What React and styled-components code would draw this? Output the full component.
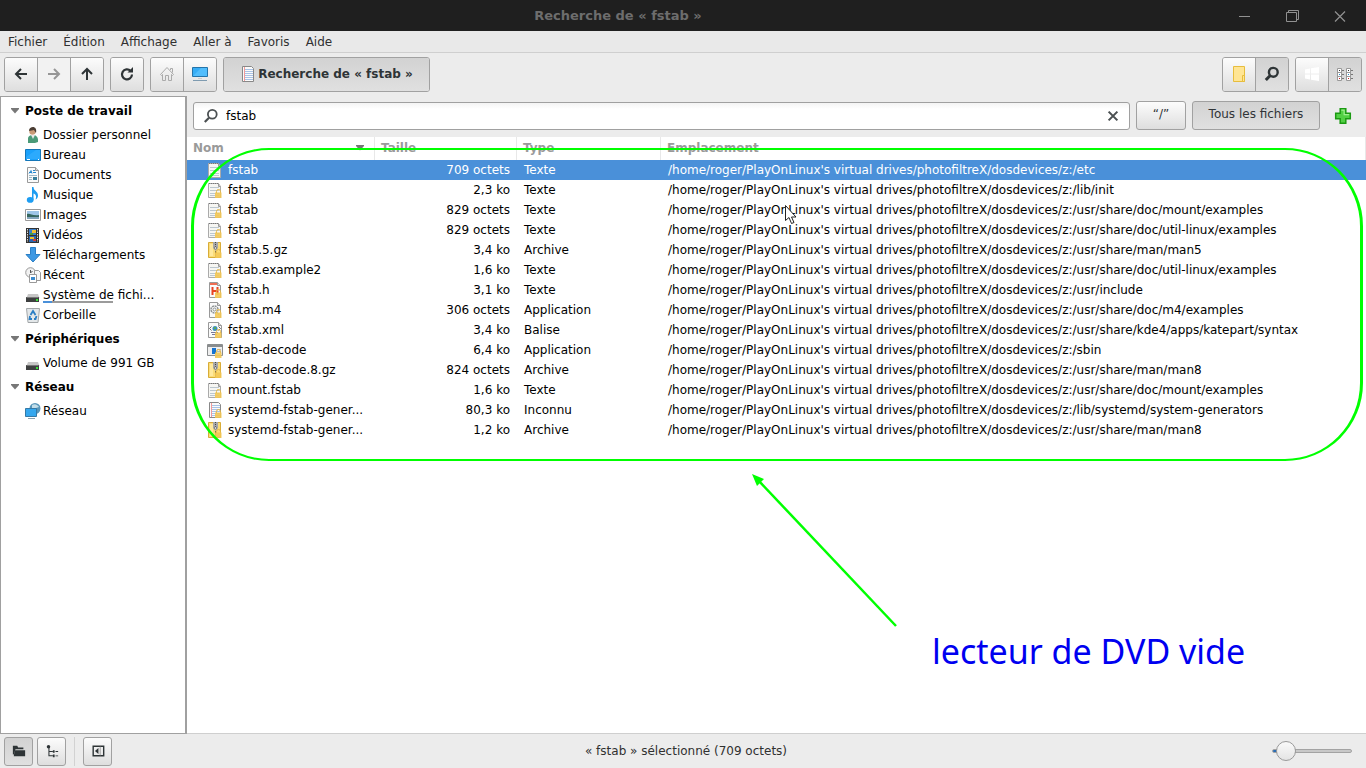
import React from 'react';
import styled, { createGlobalStyle, css } from 'styled-components';

const Global = createGlobalStyle`
  *, *::before, *::after { box-sizing: border-box; }
  body { margin: 0; background: #ececec; color: #000; font: 12px/20px "DejaVu Sans", sans-serif; }
  button, input { font: inherit; color: inherit; margin: 0; padding: 0; }
  svg { display: block; flex: none; }
`;

const Window = styled.div`
  position: relative;
  display: flex;
  flex-direction: column;
  min-height: 100vh;
  overflow: hidden;
`;

const TitleBar = styled.header`
  display: flex;
  align-items: center;
  height: 31px;
  background: #1f1f1f;
  color: #6d6d6d;
`;
const Title = styled.h1`
  flex: 1;
  margin: 0;
  padding-left: 14px;
  text-align: center;
  font-size: 13px;
  font-weight: bold;
`;
const WindowControls = styled.div`
  display: flex;
  gap: 32px;
  padding: 0 18px 0 14px;
`;
const WindowButton = styled.button`
  width: 16px;
  height: 16px;
  border: 0;
  background: none;
  color: #919191;
`;

const MenuBar = styled.nav`
  display: flex;
  gap: 16px;
  height: 22px;
  padding: 0 8px;
  background: #e9e9e9;
  border-bottom: 1px solid #cfcfcf;
`;
const MenuItem = styled.a`
  color: #303030;
  text-decoration: none;
  line-height: 22px;
`;

const Toolbar = styled.div`
  display: flex;
  gap: 6px;
  height: 43px;
  padding: 4px;
`;
const Spacer = styled.div`
  flex: 1;
`;
const raised = 'linear-gradient(#fcfcfc, #dedede)';
const sunken = 'linear-gradient(#d2d2d2, #e0e0e0)';
const ButtonGroup = styled.div`
  display: flex;
  border: 1px solid #a1a1a1;
  border-radius: 3px;
  overflow: hidden;
  height: 35px;
`;
const ToolButton = styled.button`
  display: flex;
  align-items: center;
  justify-content: center;
  width: ${(p) => (p.$wide ? '205px' : '32px')};
  gap: 2px;
  padding-bottom: 2px;
  border: 0;
  color: #2e3436;
  font-weight: bold;
  background: ${(p) => (p.$pressed ? sunken : raised)};
  & + & { border-left: 1px solid #a1a1a1; width: 33px; }
  &:disabled { background: #f2f2f2; color: #969696; }
`;

const Body = styled.div`
  display: flex;
  flex: 1;
`;
const Sidebar = styled.aside`
  width: 187px;
  flex: none;
  background: #fff;
  border: solid #a0a0a0;
  border-width: 1px 2px 1px 1px;
`;
const SectionTitle = styled.h2`
  display: flex;
  align-items: center;
  gap: 6px;
  height: 28px;
  margin: 0;
  padding-left: 10px;
  font-size: 12px;
`;
const PlaceList = styled.ul`
  list-style: none;
  margin: 0;
  padding: 0;
`;
const Place = styled.a`
  display: flex;
  align-items: center;
  gap: 2px;
  height: 20px;
  padding-left: 24px;
  color: #000;
  text-decoration: none;
`;
const PlaceName = styled.span`
  position: relative;
`;
const DiskUsage = styled.span`
  position: absolute;
  left: 0;
  bottom: 2px;
  width: 70px;
  height: 2px;
  background: linear-gradient(90deg, #4a90d9 9px, #9b9b9b 9px);
`;

const Main = styled.main`
  display: flex;
  flex-direction: column;
  flex: 1;
  min-width: 0;
  background: #fff;
  border-bottom: 1px solid #cfcfcf;
`;
const SearchRow = styled.form`
  display: flex;
  align-items: center;
  gap: 6px;
  height: 41px;
  padding: 0 14px 2px 6px;
  background: #ececec;
`;
const SearchBox = styled.label`
  display: flex;
  align-items: center;
  flex: 1;
  height: 28px;
  padding: 0 9px;
  gap: 7px;
  border: 1px solid #a0a0a0;
  border-radius: 3px;
  color: #4b5052;
  background: linear-gradient(#f4f4f4, #fff 6px);
`;
const SearchInput = styled.input`
  flex: 1;
  min-width: 0;
  border: 0;
  outline: 0;
  color: #000;
  background: none;
`;
const IconButton = styled.button`
  border: 0;
  background: none;
  color: #4b5052;
`;
const FilterButton = styled.button`
  width: ${(p) => (p.$wide ? '128px' : '50px')};
  height: 29px;
  padding-bottom: 4px;
  border: 1px solid #a1a1a1;
  border-radius: 3px;
  color: #303437;
  background: ${(p) => (p.$pressed ? sunken : raised)};
`;
const AddButton = styled(IconButton)`
  margin-left: 8px;
`;

const FileTable = styled.table`
  width: 100%;
  table-layout: fixed;
  border-collapse: separate;
  border-spacing: 0;
`;
const Heading = styled.th`
  width: ${(p) => p.$width || 'auto'};
  height: 23px;
  padding: 0 10px 2px 6px;
  text-align: left;
  color: #9a9a9a;
  border-right: 1px solid #e8e8e8;
`;
const HeadingInner = styled.div`
  display: flex;
  align-items: center;
  justify-content: space-between;
`;
const Cell = styled.td`
  height: 20px;
  padding: 0 7px;
  white-space: nowrap;
  overflow: hidden;
  text-align: ${(p) => (p.$right ? 'right' : 'left')};
`;
const NameCell = styled(Cell)`
  padding-left: 20px;
`;
const FileName = styled.div`
  display: flex;
  align-items: center;
  gap: 5px;
`;
const FileRow = styled.tr`
  ${(p) => p.$selected && css`
    background: #4a90d9;
    color: #fff;
  `}
`;

const StatusBar = styled.footer`
  display: flex;
  align-items: center;
  gap: 4px;
  height: 34px;
  padding: 0 14px 0 4px;
`;
const StatusButton = styled.button`
  display: flex;
  align-items: center;
  justify-content: center;
  width: 29px;
  height: 29px;
  border: 1px solid #a1a1a1;
  border-radius: 3px;
  color: #2e3436;
  background: ${(p) => (p.$pressed ? sunken : raised)};
`;
const Divider = styled.span`
  width: 1px;
  height: 29px;
  margin: 0 4px;
  background: #d2d2d2;
`;
const StatusText = styled.p`
  flex: 1;
  margin: 0;
  padding-right: 12px;
  text-align: center;
  color: #303030;
`;
const ZoomSlider = styled.input`
  appearance: none;
  width: 80px;
  height: 20px;
  background: none;
  &::-webkit-slider-runnable-track {
    height: 4px;
    border: 1px solid #a3a3a3;
    border-radius: 2px;
    background: linear-gradient(90deg, #2a6db5 12px, #c8c8c8 12px);
  }
  &::-webkit-slider-thumb {
    appearance: none;
    width: 20px;
    height: 20px;
    margin-top: -9px;
    border: 1px solid #9a9a9a;
    border-radius: 50%;
    background: linear-gradient(#fafafa, #e4e4e4);
  }
`;

const Outline = styled.div`
  position: absolute;
  top: 148px;
  left: 191px;
  right: 3px;
  height: 313px;
  border: solid #00ff00;
  border-width: 2px 3px;
  border-radius: 78px;
  pointer-events: none;
`;
const Arrow = styled.svg`
  position: absolute;
  left: 750px;
  top: 472px;
  pointer-events: none;
`;
const Note = styled.p`
  position: absolute;
  left: 932px;
  top: 629px;
  margin: 0;
  color: #0000f0;
  font: 34px/44px "Noto Sans", sans-serif;
  white-space: nowrap;
`;
const Pointer = styled.svg`
  position: absolute;
  left: 784px;
  top: 204px;
  pointer-events: none;
`;

const Svg = ({ size = 16, children }) => (
  <svg width={size} height={size} viewBox="0 0 16 16" fill="none" aria-hidden="true">{children}</svg>
);
const Line = ({ d, w = 2, c = 'currentColor' }) => <path d={d} stroke={c} strokeWidth={w} />;

const Caret = () => (
  <svg width="8" height="6" viewBox="0 0 8 6" aria-hidden="true"><path d="M0 0h8v1L4 5.5 0 1z" fill="#777" /></svg>
);
const Magnifier = ({ light }) => (
  <Svg><circle cx="9.3" cy="6.3" r="4.4" stroke="currentColor" strokeWidth={light ? 1.8 : 2.4} /><Line d="M6 9.7 1.8 14" w={light ? 2.2 : 3} /></Svg>
);

const SheetPage = ({ tone = '#999' }) => (
  <><path d="M2.5.5h8l3 3v12h-11z" fill="#fafafa" stroke={tone} /><path d="M10.500.5v3h3" fill="#ddd" stroke={tone} /></>
);
const Lined = () => (
  <>
    <path d="M2.500.5h9l2 2v13h-11z" fill="#fbfbfb" stroke="#888" />
    <path d="M5 3.500h8M5 5.500h8M5 7.500h8M5 9.500h8M5 11.500h8M5 13.500h8" stroke="#a9c3e6" />
    <path d="M4.500 1v14" stroke="#f29a9a" />
  </>
);
const Lock = () => (
  <><path d="M9.500 11V9.500a2 2 0 0 1 4 0V11" stroke="#e3b84c" /><path d="M8 10.500h6.500V16H8z" fill="#f3c653" opacity=".9" /></>
);

const fileArt = {
  text: (
    <>
      <path d="M1.500 1.500h10l2 3v11h-12z" fill="#f6f6f3" stroke="#aaa" />
      <path d="M2 1.500h10" stroke="#777" strokeDasharray="1 1" />
      <path d="M11.500 1.500v3h2" stroke="#999" />
      <path d="M3 5.500h9M3 8.500h9M3 11.500h9M3 13.500h9" stroke="#bcc7ce" />
    </>
  ),
  archive: (
    <>
      <path d="M1.500.500h12v15h-12z" fill="#fbdc78" stroke="#d8ac37" />
      <path d="M3 2h3v12H3z" fill="#ffe99d" />
      <path d="M6 0h5v6L8.500 9 6 6z" fill="#a8a8a8" />
      <path d="M8.500 0v8" stroke="#444" strokeDasharray="1 1" />
      <path d="M8.500 9v7" stroke="#8c7a43" />
      <circle cx="8.500" cy="6" r="1.200" fill="#eee" stroke="#555" strokeWidth=".6" />
    </>
  ),
  header: <><SheetPage /><path d="M3 1h7v2H3z" fill="#ef6e52" /><path d="M5.500 5v8M10.500 5v8M5.500 9h5" stroke="#e84322" strokeWidth="2" /></>,
  script: <><SheetPage /><circle cx="7.500" cy="7.500" r="3.500" stroke="#8d9294" strokeWidth="1.500" strokeDasharray="2 .7" /><circle cx="7.500" cy="7.500" r="1.500" stroke="#8d9294" /><Line d="M10 10l2 3" c="#aaa" w={1} /></>,
  markup: <><path d="M1.500.500h10l3 3v12h-13z" fill="#fafafa" stroke="#999" /><path d="M11.500.500v3h3" fill="#ddd" stroke="#999" /><path d="M4.500 4.500l-2 2 2 2M11.500 4.500l2 2-2 2" stroke="#666" /><circle cx="8" cy="6.500" r="2.500" fill="#3e8fc0" /><path d="M7 5h2v2H7z" fill="#5cad54" /><path d="M4 10.500h7M5 12.500h5" stroke="#777799" /></>,
  program: <><path d="M.500 2.500h15v11H.500z" fill="#eee" stroke="#8a8d8e" /><path d="M1 2h14v3H1z" fill="#8a8d8e" /><path d="M5 6h4v6H5z" fill="#1673d1" /><path d="M10 7.500h4M10 9.500h4" stroke="#bbb" /></>,
  unknown: <Lined />,
};
const FileIcon = ({ kind, locked }) => <Svg>{fileArt[kind]}{locked && <Lock />}</Svg>;

const Drive = (
  <>
    <path d="M3 7h10l1.500 4h-13z" fill="#c6c6c6" />
    <path d="M1 10h13v5H1z" fill="#3e4040" />
    <path d="M1.500 10.500h12" stroke="#777" />
    <path d="M11 12h2v2h-2z" fill="#38e038" />
  </>
);
const placeArt = {
  home: <><path d="M3 16V12c0-3 2-4 5-4s5 2 5 5v2c-3 1.500-7 1.500-10 1z" fill="#4a9a78" /><path d="M6 8l2 4 2-4z" fill="#e8e8e8" /><circle cx="7.500" cy="4.500" r="3.200" fill="#c99a76" /><path d="M4 4C4 1 6 0 8 0s4 2 3 6L9 3z" fill="#4b3d33" /></>,
  desktop: <><path d="M.500 2.500h15v11H.500z" fill="#1ba1fb" stroke="#1476b8" /><path d="M1 10l10-7h4v9H1z" fill="#38b0ff" opacity=".6" /><path d="M2 12.500h3M13 12.500h1" stroke="#fff" /></>,
  documents: <><SheetPage /><path d="M4 6.500l2-3 1 3M4 5.500h3M8 3.500h2M8 5.500h3" stroke="#2688cf" /><path d="M4 8.500h8M4 10.500h3M4 12.500h3" stroke="#9bb7c6" /><path d="M8 10h4v3H8z" fill="#377d9a" /></>,
  music: <><path d="M7 0h1.500c0 4 4.500 4 4.500 8.500 0 2-1 3.500-2.500 4 1.500-3.500 0-5.500-2-6V13H7z" fill="#1e9df2" /><ellipse cx="5.200" cy="12.900" rx="3.400" ry="2.800" fill="#1e9df2" /></>,
  pictures: <><path d="M.500 2.500h15v11H.500z" fill="#fff" stroke="#999" /><path d="M2 4h12v8H2z" fill="#9fc6e8" /><path d="M2 7c3-1 5 2 12 1v2H2z" fill="#36675f" /><path d="M2 10h12v2H2z" fill="#84a5bc" /></>,
  videos: <><path d="M1 1h13v15H1z" fill="#333" /><path d="M2.500 2v13M12.500 2v13" stroke="#ddd" strokeDasharray="1.500 1" /><path d="M4 2h7v6H4z" fill="#397fc9" /><path d="M4 9h7v6H4z" fill="#2a66b0" /><path d="M7 3h4v3H7zM5 10h4v2H5z" fill="#f0c030" /><path d="M5 6h3v2H5z" fill="#4b9e3f" /><path d="M8 12h3v2H8z" fill="#d23c30" /></>,
  downloads: <path d="M5.500.500h5v7h4.500L8 15 1 7.500h4.500z" fill="#3d98e3" stroke="#2b7fc6" />,
  recent: <><circle cx="5.500" cy="5.500" r="4.800" fill="#f2f2f2" stroke="#999" /><path d="M5.500 3v3l2-2" stroke="#555" /><path d="M9.500 3.500h4l2 2v8h-6z" fill="#f8f8f8" stroke="#999" /><path d="M4.500 7.500h7v8h-7z" fill="#fff" stroke="#999" /><path d="M6 10h4v3H6z" fill="#3b8ace" /></>,
  drive: Drive,
  trash: <><path d="M1.500 1.500h13l-1.500 14H3z" fill="#e3e7e9" stroke="#a2a6a8" /><path d="M5.500 8l2.500-4 2.500 4M11.500 9l-1 3H9M7 12H4.500L5 9" stroke="#2b7ec4" strokeWidth="1.800" /></>,
  network: <><circle cx="10" cy="5.500" r="5.500" fill="#5895b8" /><path d="M7 2c3-2 6 0 7 2l-3 1-2 3-2-2z" fill="#c3dde8" /><path d="M.500 5.500h11v8H.500z" fill="#35a7ee" stroke="#3579a5" /><path d="M3 15.500h7" stroke="#8aa1ae" /></>,
};

const sections = [
  ['Poste de travail', [
    ['home', 'Dossier personnel'], ['desktop', 'Bureau'], ['documents', 'Documents'], ['music', 'Musique'],
    ['pictures', 'Images'], ['videos', 'Vidéos'], ['downloads', 'Téléchargements'], ['recent', 'Récent'],
    ['drive', 'Système de fichi...', true], ['trash', 'Corbeille'],
  ]],
  ['Périphériques', [['drive', 'Volume de 991 GB']]],
  ['Réseau', [['network', 'Réseau']]],
];

const root = "/home/roger/PlayOnLinux's virtual drives/photofiltreX/dosdevices/z:";
const files = [
  ['text', 'fstab', '709 octets', 'Texte', '/etc'],
  ['text', 'fstab', '2,3 ko', 'Texte', '/lib/init'],
  ['text', 'fstab', '829 octets', 'Texte', '/usr/share/doc/mount/examples'],
  ['text', 'fstab', '829 octets', 'Texte', '/usr/share/doc/util-linux/examples'],
  ['archive', 'fstab.5.gz', '3,4 ko', 'Archive', '/usr/share/man/man5'],
  ['text', 'fstab.example2', '1,6 ko', 'Texte', '/usr/share/doc/util-linux/examples'],
  ['header', 'fstab.h', '3,1 ko', 'Texte', '/usr/include'],
  ['script', 'fstab.m4', '306 octets', 'Application', '/usr/share/doc/m4/examples'],
  ['markup', 'fstab.xml', '3,4 ko', 'Balise', '/usr/share/kde4/apps/katepart/syntax'],
  ['program', 'fstab-decode', '6,4 ko', 'Application', '/sbin'],
  ['archive', 'fstab-decode.8.gz', '824 octets', 'Archive', '/usr/share/man/man8'],
  ['text', 'mount.fstab', '1,6 ko', 'Texte', '/usr/share/doc/mount/examples'],
  ['unknown', 'systemd-fstab-gener...', '80,3 ko', 'Inconnu', '/lib/systemd/system-generators'],
  ['archive', 'systemd-fstab-gener...', '1,2 ko', 'Archive', '/usr/share/man/man8'],
];

export default function App() {
  return (
    <Window>
      <Global />
      <TitleBar>
        <Title>Recherche de « fstab »</Title>
        <WindowControls>
          <WindowButton aria-label="Réduire"><Svg><Line d="M3 8.500h11" w={1} /></Svg></WindowButton>
          <WindowButton aria-label="Restaurer"><Svg><path d="M2.500 4.500h10v9h-10zM4.500 4.500v-2h10v9h-2" stroke="currentColor" /></Svg></WindowButton>
          <WindowButton aria-label="Fermer"><Svg><Line d="M3 3.500l10 10M13 3.500l-10 10" w={1.2} /></Svg></WindowButton>
        </WindowControls>
      </TitleBar>
      <MenuBar>
        {['Fichier', 'Édition', 'Affichage', 'Aller à', 'Favoris', 'Aide'].map((m) => <MenuItem href="#" key={m}>{m}</MenuItem>)}
      </MenuBar>
      <Toolbar>
        <ButtonGroup>
          <ToolButton aria-label="Précédent"><Svg><Line d="M14 8H3M8 3L3 8l5 5" /></Svg></ToolButton>
          <ToolButton aria-label="Suivant" disabled><Svg><Line d="M2 8h11M8 3l5 5-5 5" /></Svg></ToolButton>
          <ToolButton aria-label="Dossier parent"><Svg><Line d="M8 14V3M3 8l5-5 5 5" /></Svg></ToolButton>
        </ButtonGroup>
        <ButtonGroup>
          <ToolButton aria-label="Actualiser"><Svg><Line d="M11.500 4.800A5 5 0 1 0 13 8.500" w={2.2} /><path d="M8.500 6.500h5.500V1z" fill="currentColor" /></Svg></ToolButton>
        </ButtonGroup>
        <ButtonGroup>
          <ToolButton aria-label="Dossier personnel"><Svg><path d="M1.500 8.500l6.500-7 6.500 7-1 1-1-1v6h-3v-5h-3v5h-3v-6l-1 1zM11.500 4V2.500h2v4" stroke="#aaa" /></Svg></ToolButton>
          <ToolButton aria-label="Bureau"><Svg><path d="M.500 1.500h15v9H.500z" fill="#37adf5" stroke="#2474aa" /><path d="M1 10l8-8h6v8z" fill="#5dc3ff" opacity=".7" /><path d="M6 12h4v1H6z" fill="#ccc" /><path d="M1 14.500h14" stroke="#7f9bb0" /></Svg></ToolButton>
        </ButtonGroup>
        <ButtonGroup>
          <ToolButton $wide $pressed><Svg><Lined /></Svg>Recherche de « fstab »</ToolButton>
        </ButtonGroup>
        <Spacer />
        <ButtonGroup>
          <ToolButton aria-label="Dossiers"><Svg><path d="M2.500.500h11v15h-11z" fill="#ffe594" stroke="#e7bd3d" /><path d="M11.500 9.500h2v6h-2z" fill="#ffe594" stroke="#e7bd3d" /></Svg></ToolButton>
          <ToolButton aria-label="Rechercher" $pressed><Magnifier /></ToolButton>
        </ButtonGroup>
        <ButtonGroup>
          <ToolButton aria-label="Icônes"><Svg><path d="M1 3.500l5-1v5H1zM7 2.300L15 1v6.500H7zM1 8.500h5v5l-5-1zM7 8.500h8V15l-8-1.300z" fill="#fff" /></Svg></ToolButton>
          <ToolButton aria-label="Liste" $pressed>
            <Svg>
              <path d="M.500 2.500h4v12h-4zM9.500 2.500h4v12h-4zM.500 6.500h4M.500 10.500h4M9.500 6.500h4M9.500 10.500h4" fill="#fff" stroke="#999" />
              <path d="M5 4.500h2M5 8.500h2M5 12.500h2M14 4.500h2M14 8.500h2M14 12.500h2" stroke="#777" />
              <path d="M2 4h1v1H2zM11 4h1v1h-1z" fill="#333" /><path d="M2 8h1v1H2zM11 8h1v1h-1z" fill="#28c" /><path d="M2 12h1v1H2zM11 12h1v1h-1z" fill="#c22" />
            </Svg>
          </ToolButton>
        </ButtonGroup>
      </Toolbar>
      <Body>
        <Sidebar>
          {sections.map(([title, places]) => (
            <section key={title}>
              <SectionTitle><Caret />{title}</SectionTitle>
              <PlaceList>
                {places.map(([icon, label, usage]) => (
                  <li key={label}><Place href="#"><Svg>{placeArt[icon]}</Svg><PlaceName>{label}{usage && <DiskUsage />}</PlaceName></Place></li>
                ))}
              </PlaceList>
            </section>
          ))}
        </Sidebar>
        <Main>
          <SearchRow onSubmit={(e) => e.preventDefault()}>
            <SearchBox>
              <Magnifier light />
              <SearchInput aria-label="Rechercher" defaultValue="fstab" />
              <IconButton type="reset" aria-label="Effacer"><Svg size={14}><Line d="M3 3l10 10M13 3L3 13" w={2.4} /></Svg></IconButton>
            </SearchBox>
            <FilterButton type="button">“/”</FilterButton>
            <FilterButton type="button" $wide $pressed>Tous les fichiers</FilterButton>
            <AddButton type="button" aria-label="Ajouter"><Svg size={18}><path d="M5.500 1.500h5v4h4v5h-4v4h-5v-4h-4v-5h4z" fill="#52d044" stroke="#1b9a12" strokeWidth="1.300" /><path d="M6.500 2.800h2.500v4h4.500" stroke="#a0ee90" /></Svg></AddButton>
          </SearchRow>
          <FileTable>
            <thead>
              <tr>
                <Heading $width="188px"><HeadingInner>Nom<Caret /></HeadingInner></Heading>
                <Heading $width="142px">Taille</Heading>
                <Heading $width="144px">Type</Heading>
                <Heading>Emplacement</Heading>
              </tr>
            </thead>
            <tbody>
              {files.map(([kind, name, size, type, path], i) => (
                <FileRow key={i} $selected={i === 0}>
                  <NameCell><FileName><FileIcon kind={kind} locked={i > 0} />{name}</FileName></NameCell>
                  <Cell $right>{size}</Cell>
                  <Cell>{type}</Cell>
                  <Cell>{root + path}</Cell>
                </FileRow>
              ))}
            </tbody>
          </FileTable>
        </Main>
      </Body>
      <StatusBar>
        <StatusButton aria-label="Raccourcis" $pressed><Svg size={14}><path d="M1 2h5l1 2h6v2H4l-2 6H1z" fill="currentColor" /><path d="M3 7h12v7H2z" fill="currentColor" /></Svg></StatusButton>
        <StatusButton aria-label="Arborescence"><Svg size={14}><circle cx="4" cy="3" r="2" fill="currentColor" /><path d="M4.500 3v10.500H9M4.500 8.500H9" stroke="currentColor" strokeWidth="1.200" /><path d="M9 7h2v3H9zM9 12h2v3H9zM12 8h3v1h-3zM12 13h3v1h-3z" fill="currentColor" /></Svg></StatusButton>
        <Divider />
        <StatusButton aria-label="Masquer le panneau"><Svg size={14}><path d="M2.500 2.500h12v11h-12z" stroke="currentColor" strokeWidth="1.600" /><path d="M8.500 4.500v7L4.500 8z" fill="currentColor" /><path d="M10.500 3v10" stroke="#999" /></Svg></StatusButton>
        <StatusText>« fstab » sélectionné (709 octets)</StatusText>
        <ZoomSlider type="range" aria-label="Zoom" min="0" max="100" defaultValue="6" />
      </StatusBar>
      <Outline />
      <Arrow width="150" height="158" viewBox="0 0 150 158" aria-hidden="true">
        <path d="M146 154L8 8" stroke="#00ff00" strokeWidth="2.500" />
        <path d="M2 2l12 5-7 7z" fill="#00ff00" />
      </Arrow>
      <Note>lecteur de DVD vide</Note>
      <Pointer width="14" height="22" viewBox="0 0 14 22" aria-hidden="true">
        <path d="M1.500 1.500v15l3.500-3 2.500 6 2.500-1-2.500-5.500h4.500z" fill="#fff" stroke="#222" />
      </Pointer>
    </Window>
  );
}
